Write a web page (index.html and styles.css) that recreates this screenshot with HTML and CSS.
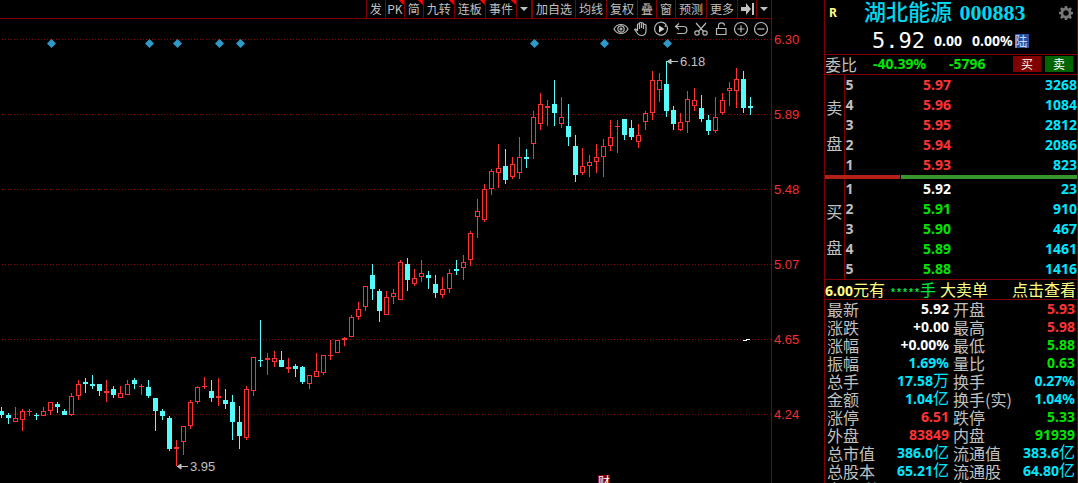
FILE: index.html
```html
<!DOCTYPE html>
<html lang="zh-CN">
<head>
<meta charset="utf-8">
<title>湖北能源 000883</title>
<link rel="stylesheet" href="styles.css">
</head>
<body>
<main class="terminal">
  <section class="chart">
    <nav class="toolbar">
      <button>发</button>
      <button class="hot tight">PK</button>
      <button class="hot">简</button>
      <button class="hot">九转</button>
      <button class="hot">连板</button>
      <button class="hot">事件</button>
      <button class="drop" aria-label="更多事件"><svg width="8" height="4" viewBox="0 0 8 4"><path d="M0 0h8L4 4z" fill="currentColor"/></svg></button>
      <button class="group">加自选</button>
      <button>均线</button>
      <button>复权</button>
      <button>叠</button>
      <button>窗</button>
      <button>预测</button>
      <button>更多</button>
      <button class="tight" aria-label="跳到最后"><svg width="13" height="12" viewBox="0 0 13 12"><path d="M0 4h5V0l5 6-5 6V8H0zM11 0h2v12h-2z" fill="currentColor"/></svg></button>
      <button class="drop" aria-label="展开"><svg width="8" height="4" viewBox="0 0 8 4"><path d="M0 0h8L4 4z" fill="currentColor"/></svg></button>
    </nav>
    <div class="tools">
      <button aria-label="显示"><svg viewBox="0 0 16 16"><path d="M1 8c3-6 11-6 14 0-3 6-11 6-14 0z"/><circle cx="8" cy="8" r="3.2"/><circle cx="8" cy="8" r="1"/></svg></button>
      <button aria-label="拖动"><svg viewBox="0 0 16 16"><path d="M4.500 10V3.500q1-1.500 2 0V8M6.500 7V2q1-1.500 2 0v5M8.500 7V2.500q1-1.500 2 0V8M10.500 8V4q1.500-1.500 2.500 0v6c0 3-2 4.500-4.500 4.500-3 0-4-1.500-5-3.500L1.500 8.500Q2.500 7 4.500 10"/></svg></button>
      <button aria-label="回放"><svg viewBox="0 0 16 16"><path d="M12.500 3A6.500 6.500 0 1 0 14.500 8M14.500 8A6.500 6.500 0 0 0 13.500 4.500M10.500 1.500l2.500 2-1 2.500"/><path class="solid" d="M6 4.500v7L11.500 8z"/></svg></button>
      <button aria-label="撤销"><svg viewBox="0 0 16 16"><path d="M6 2.500L2.500 5.500 6 8.500M3 5.500h7.500c4.500 0 4.500 7 0 7H4"/></svg></button>
      <button aria-label="剪切"><svg viewBox="0 0 16 16"><path d="M3 2l7.500 8.500M13 2L5.500 10.500"/><circle cx="4" cy="12" r="2.200"/><circle cx="12" cy="12" r="2.200"/></svg></button>
      <button aria-label="锁定"><svg viewBox="0 0 16 16"><path d="M3.500 7.500h9.500v6H3.500zM5.500 7.500V4.500C5.500 1 11.500 1 11.500 4.500"/></svg></button>
      <button aria-label="放大"><svg viewBox="0 0 16 16"><circle cx="8" cy="8" r="6.500"/><path d="M4.500 8h7M8 4.500v7"/></svg></button>
      <button aria-label="缩小"><svg viewBox="0 0 16 16"><circle cx="8" cy="8" r="6.500"/><path d="M4.500 8h7"/></svg></button>
    </div>
    <svg class="plot" id="plot" viewBox="0 39 771 444" role="img" aria-label="日K线">
      <g class="grid">
        <path d="M2 39.500H771M2 114.500H771M2 189.500H771M2 264.500H771M2 339.500H771M2 414.500H771"/>
      </g>
      <g id="events" class="events"></g>
      <path id="up" class="up"/>
      <path id="down" class="down"/>
      <path class="arrow" d="M667 61.500H678M671 59l-3.500 2.500 3.500 2.500zM177 466.500H188M181 464l-3.500 2.500 3.500 2.500z"/>
      <text class="note" x="680" y="66">6.18</text>
      <text class="note" x="190" y="471">3.95</text>
      <path class="tick" d="M743 340h4v1h-4zM746 339h4v1h-4z"/>
      <rect class="flag" x="598" y="475" width="12" height="12"/>
      <text class="flag-text" x="598" y="486">财</text>
    </svg>
  </section>

  <div class="axis">
    <span>6.30</span><span>5.89</span><span>5.48</span><span>5.07</span><span>4.65</span><span>4.24</span>
  </div>

  <aside class="quote">
    <header class="head">
      <div class="title">
        <span class="tag">R</span>
        <h1>湖北能源 <span class="code">000883</span></h1>
        <button class="gear" aria-label="设置"><svg width="14" height="14" viewBox="0 0 14 14"><path fill="currentColor" fill-rule="evenodd" d="M5.900 0h2.200l.4 1.900 1.200.5L11.400 1.300l1.500 1.500-1.100 1.700.5 1.200 1.700.3v2.200l-1.700.4-.5 1.200 1.100 1.700-1.500 1.500-1.700-1.100-1.200.5L8.100 14H5.900l-.4-1.700-1.200-.5-1.700 1.100-1.500-1.500 1.100-1.700-.5-1.200L0 8.100V5.900l1.700-.3.5-1.200L1.100 2.700l1.500-1.500 1.700 1.100 1.200-.5zM7 4.300a2.700 2.700 0 1 0 0 5.400 2.700 2.700 0 0 0 0-5.400z"/></svg></button>
      </div>
      <div class="price">
        <strong class="last-price">5.92</strong><span>0.00</span><span>0.00%</span><span class="connect">陆</span>
      </div>
    </header>
    <div class="ratio">
      <span class="label">委比</span><span class="pct green">-40.39%</span><span class="diff green">-5796</span>
      <button class="buy">买</button><button class="sell">卖</button>
    </div>
    <table class="book">
      <tr><th class="side" rowspan="5"><span>卖</span><span>盘</span></th><th>5</th><td class="red">5.97</td><td class="cyan">3268</td></tr>
      <tr><th>4</th><td class="red">5.96</td><td class="cyan">1084</td></tr>
      <tr><th>3</th><td class="red">5.95</td><td class="cyan">2812</td></tr>
      <tr><th>2</th><td class="red">5.94</td><td class="cyan">2086</td></tr>
      <tr><th>1</th><td class="red">5.93</td><td class="cyan">823</td></tr>
    </table>
    <div class="balance"><i class="ask"></i><i class="bid"></i></div>
    <table class="book">
      <tr><th class="side" rowspan="5"><span>买</span><span>盘</span></th><th>1</th><td class="white">5.92</td><td class="cyan">23</td></tr>
      <tr><th>2</th><td class="green">5.91</td><td class="cyan">910</td></tr>
      <tr><th>3</th><td class="green">5.90</td><td class="cyan">467</td></tr>
      <tr><th>4</th><td class="green">5.89</td><td class="cyan">1461</td></tr>
      <tr><th>5</th><td class="green">5.88</td><td class="cyan">1416</td></tr>
    </table>
    <div class="alert">
      <span><b>6.00</b>元有</span><span class="hands"><span class="mask">*****</span>手</span><span>大卖单</span><a href="#">点击查看</a>
    </div>
    <table class="stats">
      <tr><th>最新</th><td class="white">5.92</td><th>开盘</th><td class="red">5.93</td></tr>
      <tr><th>涨跌</th><td class="white">+0.00</td><th>最高</th><td class="red">5.98</td></tr>
      <tr><th>涨幅</th><td class="white">+0.00%</td><th>最低</th><td class="green">5.88</td></tr>
      <tr><th>振幅</th><td class="cyan">1.69%</td><th>量比</th><td class="green">0.63</td></tr>
      <tr><th>总手</th><td class="cyan">17.58<span class="unit">万</span></td><th>换手</th><td class="cyan">0.27%</td></tr>
      <tr><th>金额</th><td class="cyan">1.04<span class="unit">亿</span></td><th>换手(实)</th><td class="cyan">1.04%</td></tr>
      <tr><th>涨停</th><td class="red">6.51</td><th>跌停</th><td class="green">5.33</td></tr>
      <tr><th>外盘</th><td class="red">83849</td><th>内盘</th><td class="green">91939</td></tr>
      <tr><th>总市值</th><td class="cyan">386.0<span class="unit">亿</span></td><th>流通值</th><td class="cyan">383.6<span class="unit">亿</span></td></tr>
      <tr><th>总股本</th><td class="cyan">65.21<span class="unit">亿</span></td><th>流通股</th><td class="cyan">64.80<span class="unit">亿</span></td></tr>
      <tr><th>市盈(静)</th><td></td><th>市盈</th><td></td></tr>
    </table>
  </aside>
</main>
<script src="chart.js"></script>
</body>
</html>
```
FILE: styles.css
```css
* { box-sizing: border-box; }
:root {
  --line: #800000;
  --gray: #c0c0c0;
  --num: "Noto Sans", "Noto Sans CJK SC", sans-serif;
  --cjk: "Noto Sans CJK SC", sans-serif;
}
body {
  margin: 0;
  background: #000;
  color: var(--gray);
  font-family: var(--cjk);
  font-size: 12px;
}
button {
  margin: 0;
  padding: 0;
  border: 0;
  background: none;
  color: inherit;
  font: inherit;
  cursor: pointer;
}
.terminal { display: flex; height: 100vh; overflow: hidden; }
.red { color: #ff3232; }
.green { color: #00e600; }
.cyan { color: #00e6ff; }
.white { color: #fff; }

/* chart */
.chart {
  flex: 1;
  min-width: 0;
  display: flex;
  flex-direction: column;
  border-right: 1px solid var(--line);
}
.toolbar {
  display: flex;
  justify-content: flex-end;
  height: 19px;
  flex: none;
  border-bottom: 1px solid var(--line);
}
.toolbar button {
  position: relative;
  display: flex;
  align-items: center;
  justify-content: center;
  min-width: 19px;
  padding: 0 3px;
  border-left: 1px solid var(--line);
  line-height: 18px;
  white-space: nowrap;
}
.toolbar .drop { min-width: 15px; }
.toolbar .tight { width: 19px; padding: 0; }
.toolbar .group { border-left-width: 2px; }
.toolbar .hot::after {
  content: "";
  position: absolute;
  top: 0;
  right: 0;
  width: 5px;
  height: 5px;
  background: #f00;
  clip-path: polygon(0 0, 100% 0, 100% 100%);
}
.tools {
  display: flex;
  flex: none;
  justify-content: flex-end;
  height: 20px;
}
.tools button { display: grid; place-items: center; width: 20px; }
.tools svg {
  width: 16px;
  height: 16px;
  fill: none;
  stroke: #b8b8b8;
  stroke-width: 1.2;
}
.tools .solid { fill: #d0d0d0; stroke: none; }
.plot { display: block; width: 100%; height: auto; flex: none; }
.grid { stroke: #900000; stroke-dasharray: 1 2; fill: none; }
.events { fill: #2d9bc8; }
.up { fill: #ff3232; fill-rule: evenodd; shape-rendering: crispEdges; }
.down { fill: #54fcfc; shape-rendering: crispEdges; }
.arrow { stroke: var(--gray); fill: var(--gray); }
.note { font: 13px "Liberation Sans", sans-serif; fill: var(--gray); }
.tick { fill: #fff; }
.flag { fill: #800000; }
.flag-text { font: 12px var(--cjk); fill: #fff; }
.axis {
  display: flex;
  flex-direction: column;
  flex: none;
  width: 52px;
  padding: 2px 0 0 2px;
  color: #f03030;
  font: 13px/75px "Liberation Sans", sans-serif;
}

/* quote panel */
.quote {
  flex: none;
  width: 254px;
  border: solid var(--line);
  border-width: 0 1px;
  font: bold 14px/20px var(--num);
}
.head { height: 55px; border-bottom: 1px solid var(--line); }
.title { display: flex; align-items: center; height: 26px; padding: 0 4px; }
.tag { width: 35px; color: #ffff80; font-size: 12px; }
.title h1 {
  flex: 1;
  margin: 0;
  color: #00d8f0;
  font: 500 22px/26px "Liberation Serif", "Noto Sans CJK SC", serif;
  white-space: nowrap;
}
.code { margin-left: 2px; font-weight: bold; }
.gear { display: grid; color: #777; }
.price { display: flex; align-items: center; padding-left: 47px; height: 30px; color: #fff; }
.price span { margin-right: 10px; line-height: 28px; }
.last-price {
  margin-right: 9px;
  font: 22px/28px "DejaVu Sans Mono", monospace;
}
.price .connect {
  width: 14px;
  margin: 0 0 0 -8px;
  background: #2850a0;
  color: #c8d8ff;
  font: 13px/14px var(--cjk);
}
.ratio {
  display: flex;
  align-items: center;
  height: 20px;
  padding: 0 4px 2px 0;
  border-bottom: 1px solid var(--line);
}
.label { width: 48px; font: 16px/18px var(--cjk); }
.pct { width: 76px; }
.diff { flex: 1; }
.ratio button {
  width: 28px;
  height: 16px;
  margin-left: 4px;
  color: #fff;
  font: 12px/16px var(--cjk);
}
.buy { background: #800000; }
.sell { background: #006400; }
table { width: 100%; border-collapse: collapse; }
th, td { padding: 0; white-space: nowrap; }
.book { table-layout: fixed; }
.book th { width: 30px; padding-left: 1px; text-align: left; }
.book .side {
  width: 19px;
  padding: 0;
  border-right: 1px solid var(--line);
  text-align: center;
  font: 16px/36px var(--cjk);
}
.side span { display: block; height: 36px; }
.book td { height: 20px; text-align: right; }
.book td:nth-last-child(2) { width: 77px; }
.balance { display: flex; gap: 1px; height: 4px; }
.ask { flex: 30; background: #b42018; }
.bid { flex: 70; background: #38962c; }
.alert {
  display: flex;
  height: 21px;
  padding-right: 1px;
  border: solid var(--line);
  border-width: 1px 0;
  color: #ffff80;
  font: 16px/19px var(--cjk);
  white-space: nowrap;
}
.alert b { font: bold 14px/18px var(--num); }
.hands { margin: 0 4px 0 5px; color: #00e640; }
.mask { font: bold 10px/18px "Liberation Mono", monospace; }
.alert a { margin-left: auto; color: inherit; text-decoration: none; }
.stats { table-layout: fixed; }
.stats th {
  width: 52px;
  height: 18px;
  padding-left: 2px;
  text-align: left;
  font: 16px/18px var(--cjk);
}
.stats td { height: 18px; padding-right: 2px; text-align: right; line-height: 18px; }
.unit { font: 16px/1 var(--cjk); line-height: 0; }
```
FILE: chart.js
```js
// Each candle: [direction, high, body top, body bottom, low] on the plot's y scale.
const candles = [
  ["d",407,411,415,418],["d",413,415,418,424],["u",407,418,422,422],["u",409,411,420,431],
  ["u",409,411,412,416],["d",413,415,416,420],["u",407,411,416,416],["u",402,402,411,415],
  ["d",402,404,407,413],["d",409,411,415,415],["u",393,396,415,416],["u",380,384,396,400],
  ["d",378,382,384,393],["d",375,384,386,389],["d",384,384,391,396],["u",380,391,393,402],
  ["d",386,389,395,398],["u",386,393,398,398],["u",380,384,395,395],["d",378,380,384,389],
  ["u",384,386,387,395],["d",380,387,396,398],["d",398,398,411,431],["d",409,411,416,420],
  ["d",416,418,449,451],["u",440,447,449,466],["u",426,426,442,455],["u",400,402,426,429],
  ["u",386,387,402,404],["u",377,386,387,389],["d",380,391,398,402],["u",378,396,398,406],
  ["d",389,400,404,409],["d",395,402,422,440],["d",406,422,436,449],["u",386,389,438,440],
  ["u",357,357,391,396],["d",320,360,361,367],["u",353,358,360,375],["u",351,358,362,367],
  ["d",351,360,367,367],["u",358,367,369,373],["d",364,366,369,377],["d",366,367,382,384],
  ["u",375,375,384,389],["u",353,371,377,377],["u",355,355,373,375],["u",340,355,356,360],
  ["u",340,340,353,353],["u",337,338,340,346],["u",315,317,337,337],["u",302,309,317,320],
  ["u",286,286,307,311],["d",264,275,289,300],["d",289,291,311,322],["u",291,297,315,315],
  ["u",289,293,297,304],["u",260,262,300,300],["d",258,264,280,291],["u",269,278,284,286],
  ["u",260,273,277,282],["d",271,275,278,289],["d",275,284,293,298],["u",277,289,295,298],
  ["u",269,273,289,293],["d",260,269,271,275],["u",255,262,268,280],["u",231,233,260,266],
  ["u",199,211,217,238],["u",184,189,220,222],["u",169,171,189,195],["u",144,168,173,188],
  ["d",149,166,180,184],["u",157,164,177,179],["u",137,157,173,179],["d",149,157,159,168],
  ["u",111,117,144,159],["u",93,104,124,130],["u",100,106,108,126],["d",80,104,113,126],
  ["u",97,117,124,128],["d",104,126,137,146],["d",135,146,175,182],["u",148,166,173,175],
  ["u",155,162,166,177],["u",144,157,162,173],["u",139,146,157,177],["u",120,137,146,151],
  ["u",120,126,127,153],["d",119,119,135,140],["d",120,128,137,140],["u",124,135,142,148],
  ["u",111,113,122,130],["u",71,80,113,120],["u",73,80,90,102],["d",61,84,111,117],
  ["d",106,110,124,130],["u",113,122,130,131],["u",91,99,122,133],["u",88,100,106,111],
  ["d",95,108,119,122],["d",115,120,131,135],["u",97,117,131,133],["u",93,100,113,115],
  ["u",82,88,91,106],["u",68,79,91,108],["d",71,79,108,113],["d",97,106,108,115]
];
const box = (x, y, w, h) => (h > 0 ? `M${x} ${y}h${w}v${h}h${-w}z` : "");
const paths = { u: "", d: "" };
candles.forEach(([dir, high, top, bottom, low], i) => {
  const x = 1 + i * 7;
  let d = box(x, high, 1, top - high) + box(x - 2, top, 5, bottom - top) + box(x, bottom, 1, low - bottom);
  if (dir === "u") d += box(x - 1, top + 1, 3, bottom - top - 2);
  paths[dir] += d;
});
document.getElementById("up").setAttribute("d", paths.u);
document.getElementById("down").setAttribute("d", paths.d);

const ns = "http://www.w3.org/2000/svg";
[51, 149, 177, 219, 240, 534, 604, 667].forEach((x) => {
  const mark = document.createElementNS(ns, "path");
  mark.setAttribute("d", `M${x + 0.5} 39l4.500 4.500-4.500 4.500-4.500-4.500z`);
  document.getElementById("events").append(mark);
});
```
